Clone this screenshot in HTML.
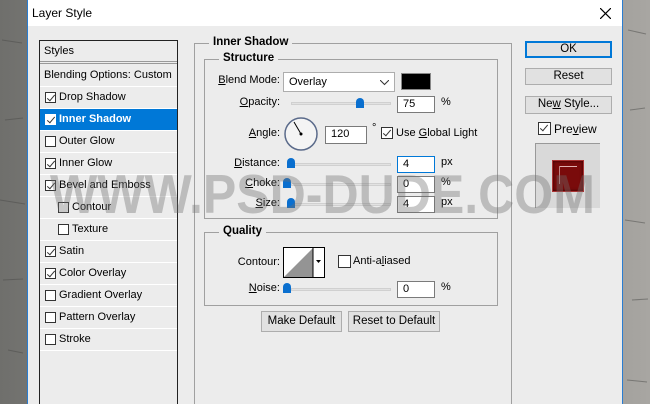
<!DOCTYPE html>
<html style="width:650px;height:404px;overflow:hidden"><head><meta charset="utf-8"><style>
*{margin:0;padding:0;box-sizing:border-box}
body{width:650px;height:404px;overflow:hidden;position:relative;font-family:"Liberation Sans",sans-serif;font-size:11px;color:#000;background:linear-gradient(90deg,#6f6f6c,#9a9894 40%,#8a8985 70%,#a8a6a2)}
.abs{position:absolute}
#dlg{left:27px;top:0;width:596px;height:404px;overflow:hidden;background:#ececec;border-left:1px solid #2a7dd1;border-right:1px solid #2a7dd1}
#title{left:0;top:0;width:594px;height:26px;background:#fff}
.u{text-decoration:underline}
.list{left:11px;top:40px;width:139px;height:380px;border:1px solid #222;background:#ececec}
.row{position:absolute;left:0;width:137px;height:22px;border-bottom:1px solid #fff;line-height:21px;padding-left:19px}
.cb{position:absolute;width:11px;height:11px;border:1px solid #333;background:#fff;top:5px;left:5px}
.cb.on::after{content:"";position:absolute;left:3px;top:0px;width:3px;height:7px;border:solid #333;border-width:0 1px 1px 0;transform:rotate(40deg)}
.grp{position:absolute;border:1px solid #a0a0a0}
.lg{position:absolute;background:#ececec;font-weight:bold;padding:0 4px;top:-8px;font-size:11.5px}
.lbl{position:absolute;text-align:right;width:90px}
.inp{position:absolute;background:#fff;border:1px solid #7a7a7a;height:17px;line-height:15px;padding-left:5px}
.trk{position:absolute;height:3px;background:#e2e2e2;border:1px solid #d0d0d0}
.th{position:absolute;width:8px;height:10px;background:#0a6fcf;border-radius:4px 4px 0 0}
.btn{position:absolute;background:#e1e1e1;border:1px solid #adadad;text-align:center;line-height:15px;font-size:11.5px}
#wm{left:50px;top:162px;font-weight:bold;font-size:55px;color:rgba(110,110,110,.38);transform:scaleX(.91);transform-origin:left top;white-space:nowrap;letter-spacing:0}
</style></head><body>
<svg class="abs" style="left:0;top:0" width="650" height="404"><g stroke="#4a4a48" stroke-width="1" opacity=".5" fill="none"><path d="M2 40l20 3M5 120l18-2M0 200l25 4M3 280l20-1M8 350l15 3M628 30l18 4M630 110l15-2M625 220l20 3M632 300l16-1M627 380l20 2"/></g></svg>
<div id="dlg" class="abs">
 <div id="title" class="abs"><span class="abs" style="left:4px;top:6px;font-size:12px">Layer Style</span>
  <svg class="abs" style="left:572px;top:8px" width="11" height="11"><path d="M0 0L11 11M11 0L0 11" stroke="#000" stroke-width="1.2"/></svg></div>
 <div class="abs list">
  <div class="row" style="top:0;height:23px;padding-left:4px;border-bottom:3px double #999">Styles</div>
  <div class="row" style="top:24px;padding-left:4px">Blending Options: Custom</div>
  <div class="row" style="top:46px"><span class="cb on"></span>Drop Shadow</div>
  <div class="row" style="top:68px;background:#0078d7;color:#fff;font-weight:bold"><span class="cb on" style="border-color:#fff"></span>Inner Shadow</div>
  <div class="row" style="top:90px"><span class="cb"></span>Outer Glow</div>
  <div class="row" style="top:112px"><span class="cb on"></span>Inner Glow</div>
  <div class="row" style="top:134px"><span class="cb on"></span>Bevel and Emboss</div>
  <div class="row" style="top:156px;padding-left:32px"><span class="cb" style="left:18px"></span>Contour</div>
  <div class="row" style="top:178px;padding-left:32px"><span class="cb" style="left:18px"></span>Texture</div>
  <div class="row" style="top:200px"><span class="cb on"></span>Satin</div>
  <div class="row" style="top:222px"><span class="cb on"></span>Color Overlay</div>
  <div class="row" style="top:244px"><span class="cb"></span>Gradient Overlay</div>
  <div class="row" style="top:266px"><span class="cb"></span>Pattern Overlay</div>
  <div class="row" style="top:288px"><span class="cb"></span>Stroke</div>
 </div>
 <div class="grp" style="left:166px;top:43px;width:318px;height:370px"><span class="lg" style="left:14px">Inner Shadow</span></div>
 <div class="grp" style="left:176px;top:59px;width:294px;height:160px"><span class="lg" style="left:14px">Structure</span>
  <span class="lbl" style="left:-15px;top:14px"><span class="u">B</span>lend Mode:</span>
  <div class="inp" style="left:78px;top:12px;width:112px;height:20px;line-height:18px;border-color:#adadad">Overlay<svg class="abs" style="left:96px;top:7px" width="9" height="6"><path d="M0 0L4.5 4.5L9 0" stroke="#333" fill="none"/></svg></div>
  <div class="abs" style="left:196px;top:13px;width:30px;height:17px;background:#000;border:1px solid #888"></div>
  <span class="lbl" style="left:-15px;top:36px"><span class="u">O</span>pacity:</span>
  <div class="trk" style="left:86px;top:42px;width:100px"></div><div class="th" style="left:151px;top:38px"></div>
  <div class="inp" style="left:192px;top:36px;width:38px">75</div><span class="abs" style="left:236px;top:36px">%</span>
  <span class="lbl" style="left:-15px;top:67px"><span class="u">A</span>ngle:</span>
  <svg class="abs" style="left:78px;top:56px" width="36" height="36"><circle cx="18" cy="18" r="16" fill="#f4f4f4" stroke="#5a6a8a" stroke-width="1.5"/><path d="M18 18L11 6" stroke="#000"/><circle cx="18" cy="18" r="1.5"/></svg>
  <div class="inp" style="left:120px;top:66px;width:42px;height:18px">120</div><span class="abs" style="left:167px;top:62px">°</span>
  <span class="cb on" style="left:176px;top:67px;width:12px;height:12px"></span><span class="abs" style="left:191px;top:67px">Use <span class="u">G</span>lobal Light</span>
  <span class="lbl" style="left:-15px;top:97px"><span class="u">D</span>istance:</span>
  <div class="trk" style="left:86px;top:103px;width:100px"></div><div class="th" style="left:82px;top:98px"></div>
  <div class="inp" style="left:192px;top:96px;width:38px;border-color:#0078d7">4</div><span class="abs" style="left:236px;top:96px">px</span>
  <span class="lbl" style="left:-15px;top:117px"><span class="u">C</span>hoke:</span>
  <div class="trk" style="left:86px;top:123px;width:100px"></div><div class="th" style="left:78px;top:118px"></div>
  <div class="inp" style="left:192px;top:116px;width:38px">0</div><span class="abs" style="left:236px;top:116px">%</span>
  <span class="lbl" style="left:-15px;top:137px"><span class="u">S</span>ize:</span>
  <div class="trk" style="left:86px;top:143px;width:100px"></div><div class="th" style="left:82px;top:138px"></div>
  <div class="inp" style="left:192px;top:136px;width:38px">4</div><span class="abs" style="left:236px;top:136px">px</span>
 </div>
 <div class="grp" style="left:176px;top:232px;width:294px;height:74px"><span class="lg" style="left:14px">Quality</span>
  <span class="lbl" style="left:-15px;top:23px">Contour:</span>
  <svg class="abs" style="left:78px;top:14px" width="42" height="31"><rect x=".5" y=".5" width="41" height="30" fill="#fff" stroke="#000"/><path d="M1 30L30 1V30Z" fill="#949494"/><path d="M30 1V30" stroke="#000"/><path d="M33 13h5l-2.5 3z" fill="#000"/></svg>
  <span class="cb" style="left:133px;top:22px;width:13px;height:13px"></span><span class="abs" style="left:148px;top:22px">Anti-a<span class="u">l</span>iased</span>
  <span class="lbl" style="left:-15px;top:49px"><span class="u">N</span>oise:</span>
  <div class="trk" style="left:86px;top:55px;width:100px"></div><div class="th" style="left:78px;top:50px"></div>
  <div class="inp" style="left:192px;top:48px;width:38px">0</div><span class="abs" style="left:236px;top:48px">%</span>
 </div>
 <div class="btn" style="left:233px;top:311px;width:81px;height:21px;line-height:19px">Make Default</div>
 <div class="btn" style="left:320px;top:311px;width:92px;height:21px;line-height:19px">Reset to Default</div>
 <div class="btn" style="left:497px;top:41px;width:87px;height:17px;border:2px solid #0078d7;line-height:13px">OK</div>
 <div class="btn" style="left:497px;top:68px;width:87px;height:17px">Reset</div>
 <div class="btn" style="left:497px;top:96px;width:87px;height:18px">Ne<span class="u">w</span> Style...</div>
 <span class="cb on" style="left:510px;top:122px;width:13px;height:13px"></span><span class="abs" style="left:526px;top:122px;font-size:12px">Pre<span class="u">v</span>iew</span>
 <div class="abs" style="left:507px;top:143px;width:65px;height:65px;background:#d9d9d9;border-left:1px solid #999;border-top:1px solid #999"></div>
 <div class="abs" style="left:524px;top:160px;width:32px;height:32px;background:#7a0b0b;border:1px solid #a33;box-shadow:inset 0 0 3px #300"></div>
 <div class="abs" style="left:531px;top:166px;width:18px;height:1px;background:#e0b0b0"></div>
 <div class="abs" style="left:531px;top:166px;width:1px;height:18px;background:#c08080"></div>
</div>
<div id="wm" class="abs">WWW.PSD-DUDE.COM</div>
</body></html>
